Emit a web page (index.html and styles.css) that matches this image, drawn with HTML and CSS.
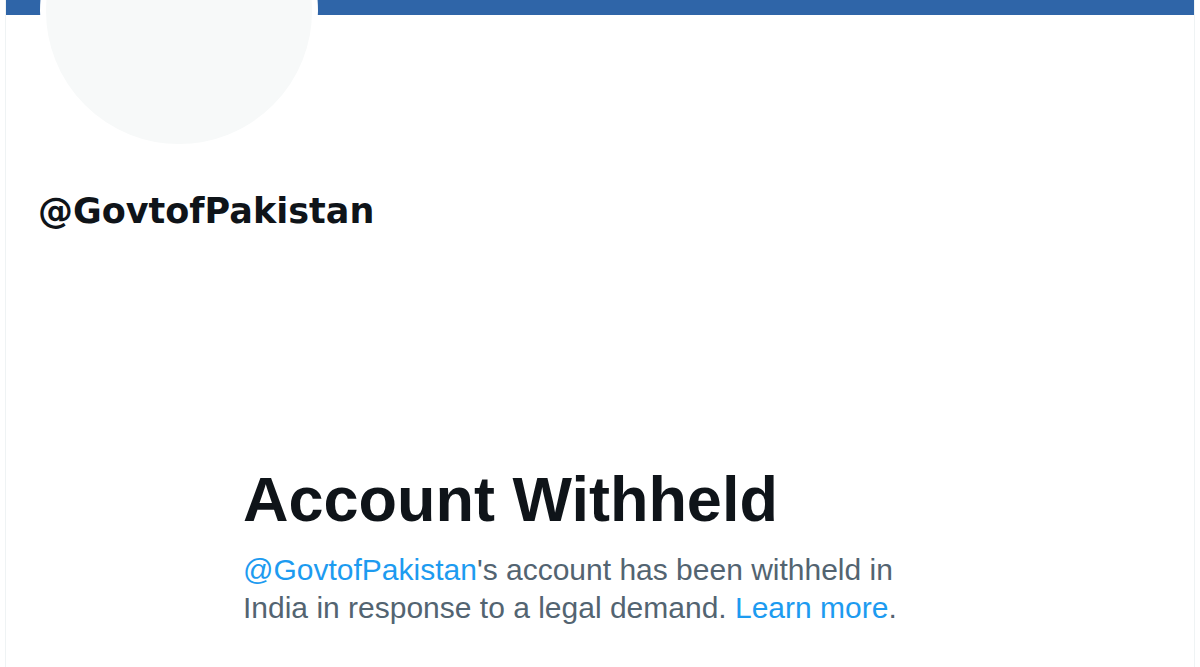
FILE: index.html
```html
<!DOCTYPE html>
<html>
<head>
<meta charset="utf-8">
<link rel="stylesheet" href="styles.css">
</head>
<body>
<div class="page">
  <div class="banner"></div>
  <div class="profile">
    <div class="avatar"></div>
    <div class="handle">@GovtofPakistan</div>
  </div>
  <div class="notice">
    <h1 class="title">Account Withheld</h1>
    <p class="desc"><a class="link" href="#">@GovtofPakistan</a>'s account has been withheld in India in response to a legal demand. <a class="link" href="#">Learn more</a>.</p>
  </div>
</div>
</body>
</html>
```

FILE: styles.css
```css
html, body {
  margin: 0;
  padding: 0;
  background: #ffffff;
  overflow: hidden;
}
body {
  font-family: "Liberation Sans", Arial, sans-serif;
  color: #0f1419;
}
.page {
  margin: 0 5px;
  height: 667px;
  border-left: 1px solid #eff3f4;
  border-right: 1px solid #eff3f4;
  position: relative;
  overflow: hidden;
}
.banner {
  height: 15px;
  background: #2f65a8;
}
.profile {
  padding-left: 34px;
  display: flex;
  flex-direction: column;
}
.avatar {
  width: 266px;
  height: 266px;
  border: 6px solid #ffffff;
  border-radius: 50%;
  background: #f7f9f9;
  margin-top: -143px;
}
.handle {
  margin-top: 41px;
  margin-left: -2px;
  font-family: "DejaVu Sans", "Liberation Sans", sans-serif;
  font-size: 35px;
  font-weight: 700;
  line-height: 40px;
}
.notice {
  margin-top: 230px;
  padding-left: 237px;
  width: 680px;
}
.title {
  margin: 0;
  font-size: 63px;
  font-weight: 800;
  line-height: 76px;
}
.desc {
  margin: 14px 0 0;
  font-size: 30px;
  line-height: 38px;
  color: #536471;
}
.link {
  color: #1d9bf0;
  text-decoration: none;
}
```
